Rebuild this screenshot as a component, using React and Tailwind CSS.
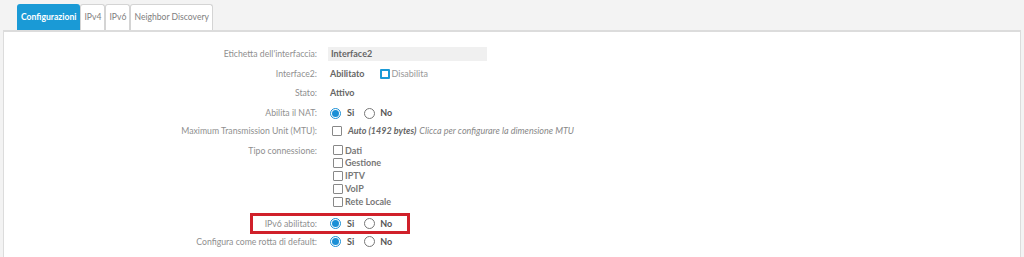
import React from 'react';

const Radio = ({ checked, className = '' }) => (
  <span
    className={`flex h-[11px] w-[11px] shrink-0 items-center justify-center rounded-full border ${
      checked ? 'border-[#1a8fd6]' : 'border-[#777]'
    } bg-white ${className}`}
  >
    {checked && <span className="h-[7px] w-[7px] rounded-full bg-[#1a8fd6]" />}
  </span>
);

const Box = ({ blue }) => (
  <span
    className={`inline-block h-[10px] w-[10px] shrink-0 rounded-[1px] ${
      blue ? 'border-2 border-[#1a9ad6]' : 'border border-[#888]'
    } bg-white`}
  />
);

const YesNo = () => (
  <div className="flex items-center">
    <Radio checked />
    <span className="ml-[6px] font-bold text-[#555]">Si</span>
    <Radio className="ml-[10px]" />
    <span className="ml-[5px] font-bold text-[#555]">No</span>
  </div>
);

const Row = ({ label, h, children, className = '' }) => (
  <div className={`flex items-center ${h} ${className}`}>
    <div className="w-[313px] shrink-0 text-right text-[8.7px] text-[#8f8f8f]">{label}</div>
    <div className="flex items-center pl-[13px]">{children}</div>
  </div>
);

const tabs = ['IPv4', 'IPv6', 'Neighbor Discovery'];

export default function App() {
  return (
    <div
      className="h-[257px] w-[1024px] overflow-hidden bg-[#f3f3f3] text-[9px]"
      style={{ fontFamily: 'Lato, "Open Sans", sans-serif' }}
    >
      <div className="flex h-[30px] items-end pl-[17px] text-[8.6px]">
        <div className="flex h-[26px] items-center rounded-t-[3px] bg-[#1a9ad6] px-[4px] font-bold text-white">
          Configurazioni
        </div>
        {tabs.map((t) => (
          <div
            key={t}
            className="flex h-[26px] items-center rounded-t-[3px] border border-b-0 border-[#d4d4d4] bg-white px-[3px] text-[#808080]"
          >
            {t}
          </div>
        ))}
      </div>
      <div className="mx-[3px] h-[240px] border-l border-r border-t-2 border-[#dcdcdc] bg-white pt-[9px]">
        <Row label="Etichetta dell'interfaccia:" h="h-[25px]">
          <div className="-ml-[2px] flex h-[14px] w-[159px] items-center bg-[#f0f0f0] pl-[3px] font-bold text-[#666]">
            Interface2
          </div>
        </Row>
        <Row label="Interface2:" h="h-[16px]">
          <span className="font-bold text-[#666]">Abilitato</span>
          <span className="ml-[15px] flex items-center">
            <Box blue />
            <span className="ml-[2px] text-[#999]">Disabilita</span>
          </span>
        </Row>
        <Row label="Stato:" h="h-[22px]">
          <span className="font-bold text-[#666]">Attivo</span>
        </Row>
        <Row label="Abilita il NAT:" h="h-[18px]">
          <YesNo />
        </Row>
        <Row label="Maximum Transmission Unit (MTU):" h="h-[17px]">
          <span className="ml-[2px] flex items-center italic">
            <Box />
            <span className="ml-[6px] font-bold text-[#666]">Auto (1492 bytes)</span>
            <span className="ml-[3px] text-[#888]">Clicca per configurare la dimensione MTU</span>
          </span>
        </Row>
        <div className="flex pt-[5px]">
          <div className="w-[313px] shrink-0 text-right text-[8.7px] leading-[13px] text-[#8f8f8f]">Tipo connessione:</div>
          <div className="flex flex-col pl-[16px]">
            {['Dati', 'Gestione', 'IPTV', 'VoIP', 'Rete Locale'].map((c) => (
              <div key={c} className="flex h-[12.8px] items-center">
                <Box />
                <span className="ml-[2px] font-bold text-[#777]">{c}</span>
              </div>
            ))}
          </div>
        </div>
        <div className="relative mt-[5px]">
          <Row label="IPv6 abilitato:" h="h-[20px]" className="pt-[1px]">
            <YesNo />
          </Row>
          <div className="pointer-events-none absolute left-[246px] top-[0px] h-[21px] w-[160px] border-[3px] border-[#d0202a]" />
        </div>
        <Row label="Configura come rotta di default:" h="h-[17px]">
          <YesNo />
        </Row>
      </div>
    </div>
  );
}
